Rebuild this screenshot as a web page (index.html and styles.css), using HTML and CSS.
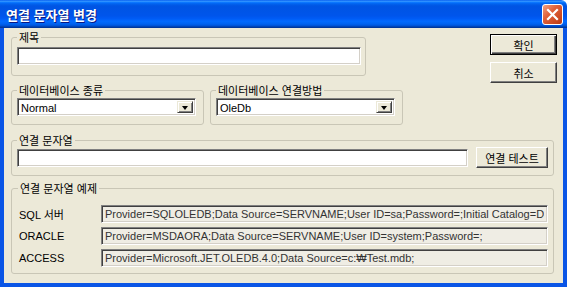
FILE: index.html
```html
<!DOCTYPE html>
<html lang="ko">
<head>
    <meta charset="UTF-8">
    <title>연결 문자열 변경</title>
    <link rel="stylesheet" href="styles.css">
</head>
<body>
    <div class="window">
        <!-- Title bar -->
        <div class="titlebar">
            <span class="title">연결 문자열 변경</span>
            <button class="close-btn" title="닫기">
                <svg width="13" height="13" viewBox="0 0 13 13">
                    <path d="M2 2 L11 11 M11 2 L2 11" stroke="#fff" stroke-width="2.2" stroke-linecap="square"/>
                </svg>
            </button>
        </div>

        <div class="client">
            <div class="top-area">
                <div class="left-col">
                    <fieldset class="group title-group">
                        <legend>제목</legend>
                        <input type="text" class="edit">
                    </fieldset>

                    <div class="combo-row">
                        <fieldset class="group combo-group">
                            <legend>데이터베이스 종류</legend>
                            <div class="combo">
                                <span class="combo-text">Normal</span>
                                <span class="combo-arrow"></span>
                            </div>
                        </fieldset>
                        <fieldset class="group combo-group">
                            <legend>데이터베이스 연결방법</legend>
                            <div class="combo">
                                <span class="combo-text">OleDb</span>
                                <span class="combo-arrow"></span>
                            </div>
                        </fieldset>
                    </div>
                </div>

                <div class="button-col">
                    <button class="btn btn-default">확인</button>
                    <button class="btn">취소</button>
                </div>
            </div>

            <!-- Connection string -->
            <fieldset class="group wide conn-group">
                <legend>연결 문자열</legend>
                <div class="conn-row">
                    <input type="text" class="edit conn-input">
                    <button class="btn btn-test">연결 테스트</button>
                </div>
            </fieldset>

            <!-- Examples -->
            <fieldset class="group wide sample-group">
                <legend>연결 문자열 예제</legend>
                <div class="sample-grid">
                    <span class="sample-label">SQL 서버</span>
                    <input type="text" class="edit readonly" readonly value="Provider=SQLOLEDB;Data Source=SERVNAME;User ID=sa;Password=;Initial Catalog=DBNAME">
                    <span class="sample-label">ORACLE</span>
                    <input type="text" class="edit readonly" readonly value="Provider=MSDAORA;Data Source=SERVNAME;User ID=system;Password=;">
                    <span class="sample-label">ACCESS</span>
                    <input type="text" class="edit readonly" readonly value="Provider=Microsoft.JET.OLEDB.4.0;Data Source=c:₩Test.mdb;">
                </div>
            </fieldset>
        </div>
    </div>
</body>
</html>
```

FILE: styles.css
```css
body {
    margin: 0;
    background: #fff;
    font-family: "Liberation Sans", "Noto Sans CJK KR", sans-serif;
    font-size: 11px;
    color: #000;
}
.window {
    width: 567px;
    height: 287px;
    display: flex;
    flex-direction: column;
    border-radius: 0 6px 0 0;
    overflow: hidden;
}
.titlebar {
    height: 28px;
    flex: none;
    display: flex;
    align-items: center;
    justify-content: space-between;
    padding: 0 4px 0 6px;
    background: linear-gradient(to bottom, #0058ee 0%, #3593ff 4%, #288eff 6%, #127dff 8%, #036ffc 10%, #0262ee 14%, #0057e5 20%, #0054e3 24%, #0055eb 56%, #005bf5 66%, #026afe 76%, #0062ef 86%, #0052d6 92%, #0040ab 96%, #003092 100%);
}
.title {
    color: #fff;
    font-family: "Noto Sans CJK KR", sans-serif;
    font-size: 13px;
    font-weight: bold;
    text-shadow: 1px 1px 0 #0a1883;
}
.close-btn {
    width: 21px;
    height: 21px;
    padding: 0;
    display: flex;
    align-items: center;
    justify-content: center;
    border: 1px solid #fff;
    border-radius: 3px;
    background: linear-gradient(135deg, #f2a283 0%, #e0603a 40%, #cc4a22 75%, #b93a16 100%);
}
.client {
    flex: 1;
    background: #ece9d8;
    border: solid #0a55e6;
    border-width: 0 4px 4px;
    padding: 3px 6px 9px 7px;
}
.top-area {
    display: flex;
    align-items: flex-start;
}
.left-col {
    width: 392px;
}
.button-col {
    margin-left: auto;
    margin-top: 3px;
    display: flex;
    flex-direction: column;
    gap: 7px;
}
.group {
    margin: 0;
    min-inline-size: 0;
    border: 1px solid #c9c6b6;
    border-radius: 3px;
}
.group legend {
    padding: 0 2px;
    line-height: 13px;
    font-family: "Noto Sans CJK KR", sans-serif;
}
.title-group {
    width: 355px;
    box-sizing: border-box;
    padding: 3px 4px 10px 5px;
}
.title-group .edit {
    width: 100%;
}
.combo-row {
    display: flex;
    gap: 6px;
    margin-top: 8px;
}
.combo-group {
    width: 193px;
    box-sizing: border-box;
    padding: 1px 7px 8px 5px;
}
.combo {
    height: 18px;
    box-sizing: border-box;
    display: flex;
    align-items: stretch;
    background: #fff;
    border: 1px solid;
    border-color: #808080 #fff #fff #808080;
    box-shadow: inset 1px 1px 0 #404040, inset -1px -1px 0 #d4d0c8;
    padding: 2px 2px 2px 2px;
}
.combo-text {
    flex: 1;
    line-height: 14px;
    padding-left: 1px;
}
.combo-arrow {
    width: 16px;
    box-sizing: border-box;
    display: flex;
    align-items: center;
    justify-content: center;
    background: #ece9d8;
    border: 1px solid;
    border-color: #ece9d8 #404040 #404040 #ece9d8;
    box-shadow: inset 1px 1px 0 #fff, inset -1px -1px 0 #808080;
}
.combo-arrow::after {
    content: "";
    border-style: solid;
    border-width: 4px 3.5px 0;
    border-color: #000 transparent transparent;
    margin-top: 1px;
}
.edit {
    height: 18px;
    box-sizing: border-box;
    margin: 0;
    padding: 0 3px;
    font: 11px "Liberation Sans", "Noto Sans CJK KR", sans-serif;
    color: #000;
    background: #fff;
    border: 1px solid;
    border-color: #808080 #fff #fff #808080;
    box-shadow: inset 1px 1px 0 #404040, inset -1px -1px 0 #d4d0c8;
    outline: none;
}
.btn {
    width: 67px;
    height: 21px;
    padding: 0;
    font: 11px "Noto Sans CJK KR", sans-serif;
    color: #000;
    background: #ece9d8;
    border: 1px solid;
    border-color: #fff #404040 #404040 #fff;
    box-shadow: inset -1px -1px 0 #808080;
}
.btn-default {
    border-color: #000;
    box-shadow: inset 1px 1px 0 #fff, inset -1px -1px 0 #404040, inset -2px -2px 0 #808080;
}
.wide {
    margin-right: 3px;
}
.conn-group {
    margin-top: 9px;
    padding: 0 5px 7px 5px;
}
.conn-row {
    display: flex;
    align-items: center;
    gap: 8px;
}
.conn-input {
    flex: 1;
}
.btn-test {
    width: 72px;
}
.sample-group {
    margin-top: 6px;
    padding: 10px 5px 6px 6px;
}
.sample-grid {
    display: grid;
    grid-template-columns: 83px 1fr;
    row-gap: 4px;
    align-items: center;
}
.sample-label {
    padding-left: 1px;
}
.edit.readonly {
    background: #efede4;
    color: #333;
}
```
